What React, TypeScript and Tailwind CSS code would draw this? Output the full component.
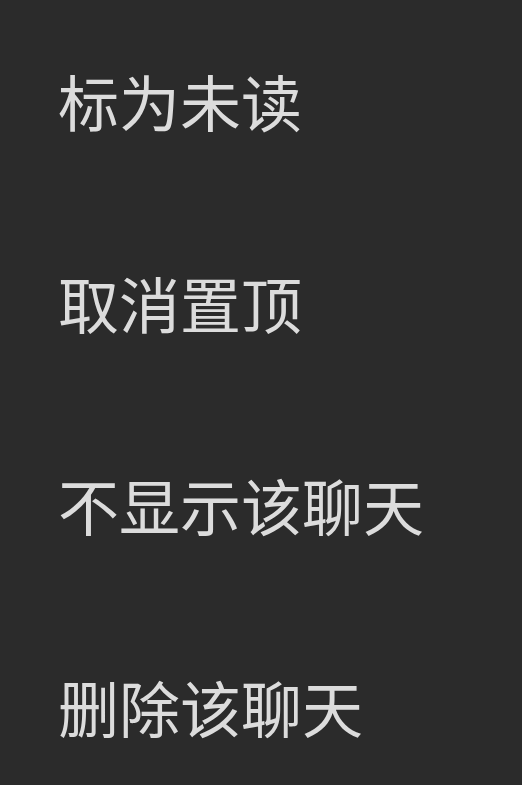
const items = ['标为未读', '取消置顶', '不显示该聊天', '删除该聊天'];

export default function App() {
  return (
    <div
      className="min-h-screen w-full bg-[#2b2b2b]"
      style={{ fontFamily: '"Noto Sans CJK SC", "Noto Sans", sans-serif' }}
    >
      <ul className="-mt-[1px] flex flex-col">
        {items.map((label) => (
          <li
            key={label}
            className="flex h-[202px] items-center pl-[58px] text-[61px] leading-none text-[#dcdcdc]"
          >
            {label}
          </li>
        ))}
      </ul>
    </div>
  );
}
